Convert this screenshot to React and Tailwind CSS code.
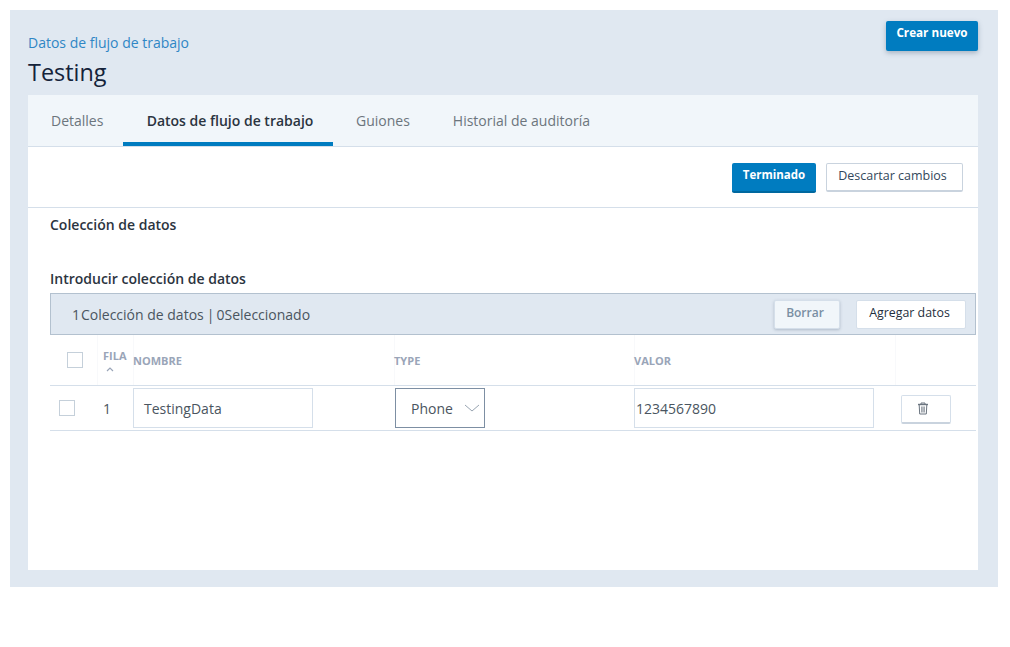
import React from "react";

const Trash = () => (
  <svg width="12" height="13" viewBox="0 0 12 13" fill="none" stroke="#6b7580" strokeWidth="1">
    <path d="M1 2.5h10" strokeWidth="1.4" />
    <path d="M4 2V1h4v1" />
    <path d="M2.2 3l.5 9h6.6l.5-9" />
    <path d="M4.7 4.5v6M6 4.5v6M7.3 4.5v6" strokeWidth="0.8" />
  </svg>
);

const App = () => {
  return (
    <div className="bg-white h-[647px] p-[10px] font-['Open_Sans',sans-serif]">
      <div className="bg-[#e0e8f1] w-[988px] h-[577px] pl-[18px] pr-[20px] pb-[17px] flex flex-col">
        {/* Header */}
        <div className="h-[85px] flex justify-between">
          <div className="pt-[23px]">
            <p className="text-[14px] leading-[20px] text-[#2f86c5]">Datos de flujo de trabajo</p>
            <h1 className="text-[23.4px] leading-[32px] mt-[3px] text-[#14233a]">Testing</h1>
          </div>
          <button className="mt-[11px] w-[92px] h-[30px] pb-[7px] rounded-[2px] bg-[#007cc0] text-white text-[11.7px] font-bold shadow-[0_2px_5px_rgba(60,80,110,0.35)]">
            Crear nuevo
          </button>
        </div>

        <div className="bg-white flex-1">
          {/* Tabs */}
          <div className="h-[52px] bg-[#f1f6fa] border-b border-[#d5dfea] flex text-[14px] text-[#6c757d]">
            <div className="w-[95px] pl-[23px] pt-[16px] leading-[20px]">Detalles</div>
            <div className="w-[210px] h-[51px] pl-[4px] pt-[16px] leading-[20px] text-center font-semibold text-[#2b3440] border-b-[4px] border-[#007cc0]">
              Datos de flujo de trabajo
            </div>
            <div className="pl-[23px] pt-[16px] leading-[20px]">Guiones</div>
            <div className="pl-[43px] pt-[16px] leading-[20px]">Historial de auditoría</div>
          </div>

          {/* Actions */}
          <div className="h-[61px] border-b border-[#d5dfea] flex justify-end gap-[10px] pt-[16px] pr-[15px]">
            <button className="w-[84px] h-[30px] pb-[5px] rounded-[2px] bg-[#007cc0] border-b-2 border-[#00689f] text-white text-[11.5px] font-bold">
              Terminado
            </button>
            <button className="w-[137px] h-[29px] pb-[2px] pr-[4px] rounded-[2px] bg-white border border-[#c9d3de] border-b-2 text-[#33475b] text-[12.5px] font-medium">
              Descartar cambios
            </button>
          </div>

          {/* Data collection */}
          <div className="pl-[22px] pr-[2px]">
            <h2 className="pt-[7px] text-[14px] leading-[20px] font-semibold text-[#2b3440]">Colección de datos</h2>
            <h3 className="pt-[34px] text-[14px] leading-[20px] font-semibold text-[#2b3440]">Introducir colección de datos</h3>

            <div className="mt-[4px] h-[42px] bg-[#e0e8f1] border border-[#b3c1cf] flex items-center justify-between pl-[21px] pr-[9px] text-[14px] text-[#4a5560]">
              <div className="flex">
                <span className="mr-[1px]">1</span>
                <span>Colección de datos</span>
                <span className="ml-[3px] mr-[2px]">|</span>
                <span>0</span>
                <span>Seleccionado</span>
              </div>
              <div className="flex gap-[16px]">
                <button className="w-[66px] h-[29px] pb-[3px] pr-[4px] rounded-[2px] bg-[#f1f6fa] border border-[#d5dfea] text-[#7a8fa3] text-[12px] font-semibold shadow-[0_1px_3px_rgba(60,80,110,0.3)]">
                  Borrar
                </button>
                <button className="w-[110px] h-[29px] pb-[2px] pr-[3px] rounded-[2px] bg-white border border-[#d5dfea] text-[#1f2f40] text-[12.4px] font-medium">
                  Agregar datos
                </button>
              </div>
            </div>

            {/* Table head */}
            <div className="grid grid-cols-[47px_36px_261px_240px_261px_1fr] h-[51px] border-b border-[#d5dfea] text-[11px] font-bold text-[#9aa5b8]">
              <div className="flex items-center pl-[17px] pb-[1px]">
                <span className="w-[16px] h-[16px] border border-[#c5d0da]"></span>
              </div>
              <div className="pl-[6px] pt-[13px] leading-[15px] shadow-[inset_1px_0_0_#f8f9fb]">
                FILA
                <svg className="ml-[3px] mt-[4px]" width="8" height="5" viewBox="0 0 8 5" fill="none" stroke="#9aa5b8" strokeWidth="1.2">
                  <path d="M1 4l3-3 3 3" />
                </svg>
              </div>
              <div className="pt-[18px] leading-[15px] shadow-[inset_1px_0_0_#f8f9fb]">NOMBRE</div>
              <div className="pt-[18px] leading-[15px] shadow-[inset_1px_0_0_#f8f9fb]">TYPE</div>
              <div className="pt-[18px] leading-[15px] shadow-[inset_1px_0_0_#f8f9fb]">VALOR</div>
              <div className="shadow-[inset_1px_0_0_#f8f9fb]"></div>
            </div>

            {/* Row */}
            <div className="grid grid-cols-[47px_36px_261px_240px_261px_1fr] h-[45px] border-b border-[#d5dfea] text-[14px] text-[#4a5560]">
              <div className="flex items-center pl-[9px]">
                <span className="w-[16px] h-[16px] border border-[#c5d0da]"></span>
              </div>
              <div className="flex items-center pl-[6px] pt-[1px]">1</div>
              <div className="pt-[2px]">
                <div className="w-[180px] h-[40px] border border-[#d5dfea] pl-[10px] leading-[40px]">TestingData</div>
              </div>
              <div className="pt-[2px] pl-[1px]">
                <div className="w-[90px] h-[40px] border border-[#7d8fa3] pl-[15px] pr-[3px] pt-[1px] flex items-center justify-between">
                  <span>Phone</span>
                  <svg className="mr-[1px] mb-[2px]" width="16" height="8" viewBox="0 0 16 8" fill="none" stroke="#98a4b1">
                    <path d="M1 1l7 6 7-6" />
                  </svg>
                </div>
              </div>
              <div className="pt-[2px]">
                <div className="w-[240px] h-[40px] border border-[#d5dfea] pl-[1px] leading-[40px]">1234567890</div>
              </div>
              <div className="pt-[9px] pl-[6px]">
                <button className="w-[50px] h-[29px] pb-[1px] pr-[6px] rounded-[2px] bg-white border border-[#d5dfea] border-b-2 border-b-[#c9d3de] flex items-center justify-center">
                  <Trash />
                </button>
              </div>
            </div>
          </div>
        </div>
      </div>
    </div>
  );
};

export default App;
